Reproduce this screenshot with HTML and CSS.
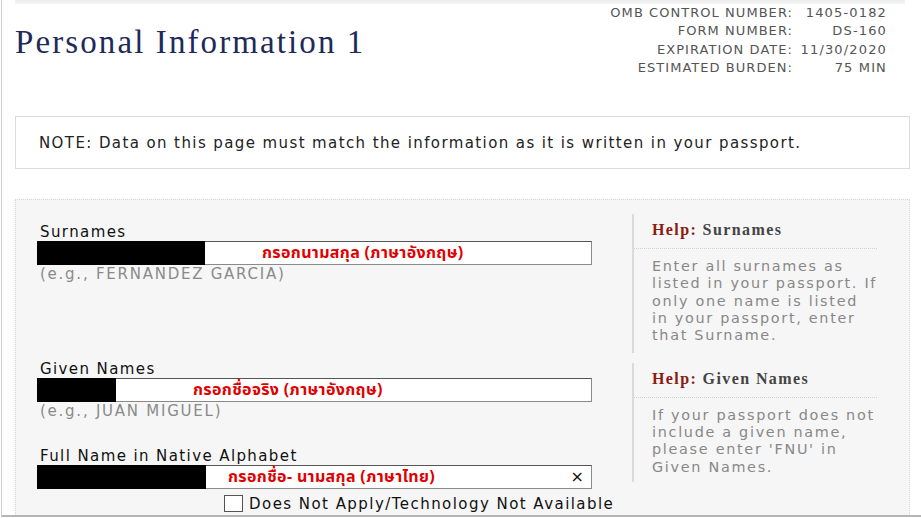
FILE: index.html
```html
<!DOCTYPE html>
<html lang="en">
<head>
<meta charset="utf-8">
<title>Personal Information 1</title>
<link rel="stylesheet" href="styles.css">
</head>
<body>
<div class="page">
  <div class="topbar"></div>
  <header class="header">
    <h1 class="title">Personal Information 1</h1>
    <dl class="meta">
      <dt>OMB CONTROL NUMBER:</dt><dd>1405-0182</dd>
      <dt>FORM NUMBER:</dt><dd>DS-160</dd>
      <dt>EXPIRATION DATE:</dt><dd>11/30/2020</dd>
      <dt>ESTIMATED BURDEN:</dt><dd>75 MIN</dd>
    </dl>
  </header>

  <div class="note">NOTE: Data on this page must match the information as it is written in your passport.</div>

  <section class="form">
    <div class="fields fields-1">
      <div class="field">
        <label class="label">Surnames</label>
        <div class="input">
          <span class="redact redact-surname"></span>
          <span class="thai thai-surname">กรอกนามสกุล (ภาษาอังกฤษ)</span>
        </div>
        <div class="example">(e.g., FERNANDEZ GARCIA)</div>
      </div>
    </div>
    <aside class="help help-1">
      <div class="help-title"><span class="help-key">Help:</span> Surnames</div>
      <p class="help-text">Enter all surnames as listed in your passport. If only one name is listed in your passport, enter that Surname.</p>
    </aside>

    <div class="fields fields-2">
      <div class="field">
        <label class="label">Given Names</label>
        <div class="input">
          <span class="redact redact-given"></span>
          <span class="thai thai-given">กรอกชื่อจริง (ภาษาอังกฤษ)</span>
        </div>
        <div class="example">(e.g., JUAN MIGUEL)</div>
      </div>
      <div class="field field-native">
        <label class="label">Full Name in Native Alphabet</label>
        <div class="input">
          <span class="redact redact-native"></span>
          <span class="thai thai-native">กรอกชื่อ- นามสกุล (ภาษาไทย)</span>
          <span class="clear">×</span>
        </div>
        <div class="check-row">
          <span class="checkbox"></span>
          <span class="check-label">Does Not Apply/Technology Not Available</span>
        </div>
      </div>
    </div>
    <aside class="help help-2">
      <div class="help-title"><span class="help-key">Help:</span> Given Names</div>
      <p class="help-text">If your passport does not include a given name, please enter 'FNU' in Given Names.</p>
    </aside>
  </section>
</div>
</body>
</html>
```

FILE: styles.css
```css
* { box-sizing: border-box; }
html, body { margin: 0; padding: 0; background: #fff; }
body { font-family: "DejaVu Sans", Verdana, sans-serif; color: #222; }

.page {
  height: 517px;
  overflow: hidden;
  margin-left: 1px;
  border-left: 1px solid #cfcfcf;
  border-bottom: 2px solid #b5b5b5;
  padding: 0 11px 0 13px;
}

.topbar {
  height: 4px;
  background: linear-gradient(#ececec, #f7f7f7);
  margin-right: 5px;
}

.header {
  display: flex;
  justify-content: space-between;
  align-items: flex-start;
}

.title {
  margin: 20px 0 0 0;
  font-family: "Liberation Serif", "Times New Roman", serif;
  font-weight: normal;
  font-size: 33px;
  line-height: 36px;
  color: #1e2a5a;
  letter-spacing: 2.1px;
}

.meta {
  margin: 0 23px 0 0;
  display: grid;
  grid-template-columns: auto 87px;
  column-gap: 7px;
  font-size: 13px;
  line-height: 18.3px;
  letter-spacing: 1.05px;
  color: #555;
}
.meta dt, .meta dd { margin: 0; text-align: right; }
.meta dd { letter-spacing: 1.15px; }

.note {
  margin-top: 39px;
  height: 53px;
  border: 1px solid #dcdcdc;
  display: flex;
  align-items: center;
  padding-left: 23px;
  padding-top: 1px;
  font-size: 15px;
  letter-spacing: 1.4px;
  color: #222;
}

.form {
  margin-top: 30px;
  background: #f6f6f6;
  border: 1px dotted #d8d8d8;
  border-bottom: none;
  display: grid;
  grid-template-columns: 616px 245px;
  align-items: start;
  padding-bottom: 40px;
}

.fields { padding-left: 21px; }
.fields-1 { padding-top: 23px; }
.fields-2 { padding-top: 7px; }

.field { display: flex; flex-direction: column; }
.field-native { margin-top: 27px; }

.label {
  font-size: 15px;
  line-height: 18px;
  letter-spacing: 1.4px;
  color: #111;
  margin-left: 3px;
}

.input {
  position: relative;
  width: 555px;
  height: 24px;
  background: #fff;
  border: 1px solid #8a8a8a;
  border-top-color: #555;
  border-left-color: #555;
  display: flex;
  align-items: center;
}

.redact {
  position: absolute;
  left: -1px;
  top: -1px;
  bottom: -1px;
  background: #000;
}
.redact-surname { width: 168px; }
.redact-given { width: 79px; }
.redact-native { width: 169px; }

.thai {
  font-family: Tahoma, "Noto Sans Thai", "Loma", "Garuda", "Norasi", sans-serif;
  font-size: 16px;
  font-weight: bold;
  letter-spacing: 0.35px;
  color: #e00000;
}
.thai-surname { margin-left: 224px; }
.thai-given { margin-left: 155px; }
.thai-native { margin-left: 190px; }

.clear {
  margin-left: auto;
  margin-right: 7px;
  font-size: 16px;
  color: #111;
}

.example {
  font-size: 15px;
  line-height: 18px;
  letter-spacing: 1.75px;
  color: #8a8a8a;
  margin-left: 3px;
}

.check-row {
  display: flex;
  align-items: center;
  gap: 6px;
  margin-left: 187px;
  margin-top: 6px;
}
.checkbox {
  width: 19px;
  height: 17px;
  background: #fff;
  border: 1px solid #555;
}
.check-label {
  font-size: 15px;
  letter-spacing: 1.45px;
  color: #111;
}

.help {
  border-left: 2px solid #dadada;
  padding-bottom: 8px;
}
.help-1 { margin-top: 14px; }
.help-2 { margin-top: 10px; padding-bottom: 6px; }

.help-title {
  font-family: "Liberation Serif", "Times New Roman", serif;
  font-weight: bold;
  font-size: 16px;
  line-height: 18px;
  letter-spacing: 1.4px;
  color: #444;
  padding: 7px 0 9px 18px;
  border-bottom: 1px dotted #d0d0d0;
}
.help-key { color: #8b1a10; }

.help-text {
  margin: 0;
  padding: 9px 0 0 18px;
  width: 245px;
  font-size: 14.4px;
  line-height: 17.3px;
  letter-spacing: 1.7px;
  color: #888;
}
```
